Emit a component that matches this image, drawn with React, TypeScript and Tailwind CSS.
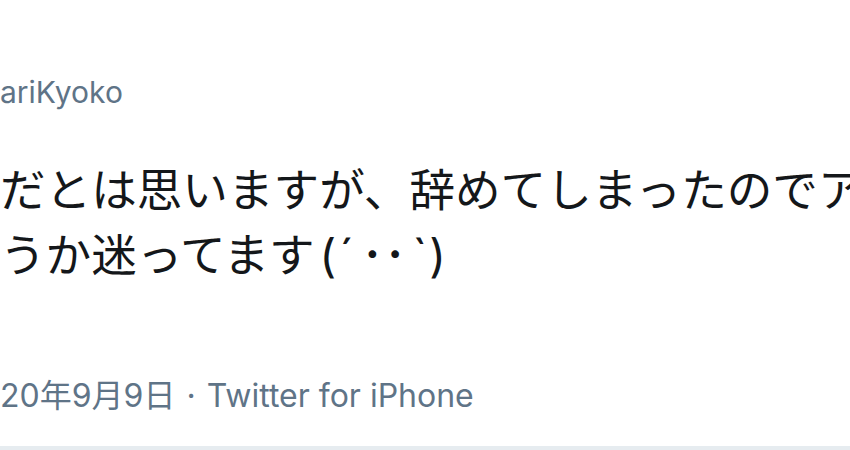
export default function App() {
  const jp = { fontFamily: '"Inter", "Noto Sans CJK JP", sans-serif' };
  return (
    <div className="w-[850px] h-[450px] bg-white overflow-hidden flex flex-col" style={jp}>
      <div className="mt-[72px] h-[40px] leading-[40px] text-[30px] text-[#5f7487] whitespace-nowrap">
        ariKyoko
      </div>
      <div className="mt-[46px] text-[45.6px] leading-[65px] text-[#14171a] whitespace-nowrap">
        <div>だとは思いますが、辞めてしまったのでア</div>
        <div>
          うか迷ってます<span className="ml-[5px] mr-[3px]">(</span>
          <span className="mr-[7px]">´</span>･･<span className="ml-[6px] mr-[2px]">`</span>)
        </div>
      </div>
      <div className="mt-[88px] h-[40px] leading-[40px] text-[32px] text-[#5f7487] whitespace-nowrap">
        20年9月9日 <span className="mx-[2px]">·</span> Twitter for iPhone
      </div>
      <div className="mt-auto h-[4px] bg-[#e6ecf0]" />
    </div>
  );
}
